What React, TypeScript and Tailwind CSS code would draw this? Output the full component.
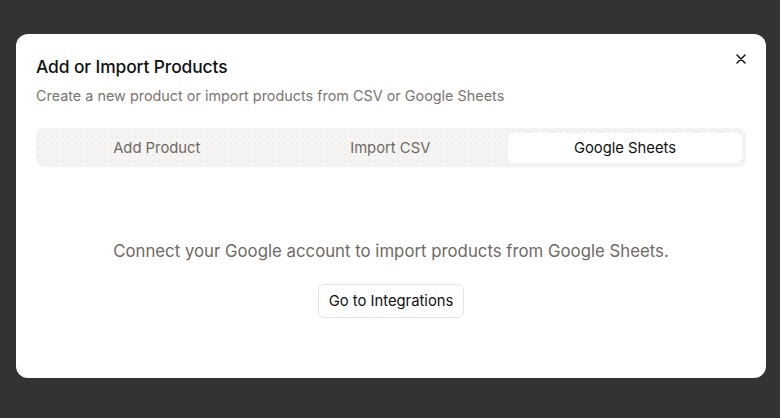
import React from "react";

export default function App() {
  return (
    <div className="w-[780px] h-[418px] bg-[#333333] pt-[34px] pl-[16px]" style={{ fontFamily: "Inter, 'Noto Sans', sans-serif" }}>
      <div className="relative w-[750px] h-[344px] bg-white rounded-[12px] px-[20px] pt-[21px] flex flex-col">
        <button className="absolute right-[15px] top-[15px] w-[20px] h-[20px] flex items-center justify-center text-[#111]">
          <svg width="10" height="10" viewBox="0 0 10 10" fill="none" stroke="currentColor" strokeWidth="1.5" strokeLinecap="round">
            <path d="M1 1L9 9M9 1L1 9" />
          </svg>
        </button>
        <h2 className="text-[17.4px] leading-[24px] font-medium text-[#111] tracking-[-0.1px]">Add or Import Products</h2>
        <p className="mt-[7px] text-[14.4px] leading-[20px] text-[#7b7570]">Create a new product or import products from CSV or Google Sheets</p>
        <div className="mt-[22px] h-[39px] rounded-[8px] bg-[#f5f4f2] bg-[radial-gradient(circle,#e8e6e2_0.6px,transparent_0.8px)] bg-size-[6px_6px] pt-[5px] pb-[4px] pl-[5px] pr-[4px] grid grid-cols-[1fr_1fr_234px] gap-[2px]">
          <div className="flex items-center justify-center pt-[1px] text-[14.8px] text-[#6f6a64]">Add Product</div>
          <div className="flex items-center justify-center pt-[1px] text-[14.8px] text-[#6f6a64]">Import CSV</div>
          <div className="flex items-center justify-center pt-[1px] text-[14.8px] text-[#111] bg-white rounded-[6px]">Google Sheets</div>
        </div>
        <div className="flex flex-col items-center">
          <p className="mt-[72px] text-[16.8px] leading-[24px] text-[#6f6a64]">Connect your Google account to import products from Google Sheets.</p>
          <button className="mt-[21px] h-[34px] px-[10px] border border-[#e6e4e1] rounded-[6px] text-[14.8px] text-[#111] bg-white">Go to Integrations</button>
        </div>
      </div>
    </div>
  );
}
